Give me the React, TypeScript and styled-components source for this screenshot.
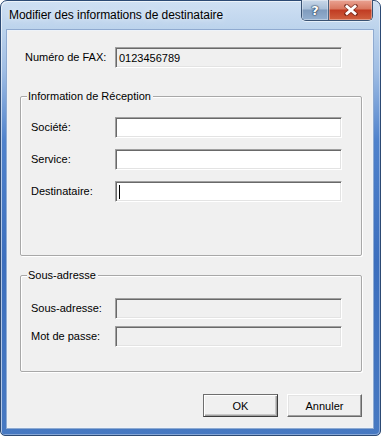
import React from "react";
import styled, { createGlobalStyle, css } from "styled-components";

const Global = createGlobalStyle`
  html, body { margin: 0; padding: 0; background: #ffffff; }
  body { font-family: "Liberation Sans", Arial, sans-serif; }
  * { box-sizing: border-box; }
`;

const Window = styled.div`
  width: 381px;
  height: 436px;
  display: flex;
  flex-direction: column;
  padding: 0 7px 7px 6px;
  border: 1px solid #2c4a74;
  border-radius: 7px 7px 5px 5px;
  background: linear-gradient(
    to bottom,
    #cfe0f3 0px,
    #bcd3ec 28px,
    #9fbde4 70px,
    #4f82cc 140px,
    #3c6fbe 260px,
    #4779c2 436px
  );
  box-shadow: inset 1px 1px 0 rgba(255, 255, 255, 0.6), inset -1px -1px 0 rgba(255, 255, 255, 0.35);
`;

const TitleBar = styled.div`
  height: 29px;
  display: flex;
  align-items: flex-start;
  justify-content: space-between;
`;

const Title = styled.div`
  padding: 7px 0 0 2px;
  font-family: "Liberation Sans", Arial, sans-serif;
  font-size: 12px;
  color: #000000;
  letter-spacing: -0.05px;
  text-shadow: 0 0 6px rgba(255, 255, 255, 0.9);
`;

const CaptionGroup = styled.div`
  display: flex;
  margin-top: -1px;
  border: 1px solid #3a5272;
  border-top: none;
  border-radius: 0 0 5px 5px;
  overflow: hidden;
  box-shadow: 0 1px 0 rgba(255, 255, 255, 0.6);
`;

const CaptionButton = styled.div<{ $variant: "help" | "close" }>`
  height: 20px;
  display: flex;
  align-items: center;
  justify-content: center;
  font-family: "DejaVu Sans", sans-serif;
  font-weight: bold;
  font-size: 13px;
  color: #ffffff;
  text-shadow: 0 0 2px #1f3550, 0 0 1px #1f3550, 0 0 1px #1f3550;
  box-shadow: inset 0 0 0 1px rgba(255, 255, 255, 0.35);
  ${(p) =>
    p.$variant === "help"
      ? css`
          width: 27px;
          border-right: 1px solid #4a617e;
          background: linear-gradient(to bottom, #c9d8e9 0%, #a9bfd8 45%, #7f9bbd 50%, #93afcf 100%);
        `
      : css`
          width: 43px;
          background: linear-gradient(to bottom, #eaa393 0%, #d9775f 45%, #c13b22 50%, #d0613f 100%);
        `}
`;

const Client = styled.div`
  flex: 1;
  display: flex;
  flex-direction: column;
  padding: 16px 10px 0 12px;
  background: #f0f0f0;
  border: 1px solid #eef3f9;
  box-shadow: 0 0 0 1px #8faad0;
  font-family: "Liberation Sans", Arial, sans-serif;
  font-size: 11px;
  color: #000000;
`;

const Row = styled.div<{ $indent?: number; $labelWidth: number }>`
  display: grid;
  grid-template-columns: ${(p) => p.$labelWidth}px 227px;
  align-items: center;
  margin-left: ${(p) => p.$indent ?? 0}px;
  height: 21px;
`;

const Label = styled.div`
  font-size: 11px;
  line-height: 13px;
  white-space: nowrap;
`;

const Field = styled.div<{ $readOnly?: boolean }>`
  height: 21px;
  width: 227px;
  display: flex;
  align-items: center;
  padding: 0 3px;
  font-size: 11px;
  background: ${(p) => (p.$readOnly ? "#f0f0f0" : "#ffffff")};
  border: 1px solid;
  border-color: #a0a0a0 #ffffff #ffffff #a0a0a0;
  box-shadow: inset 1px 1px 0 #696969, inset -1px -1px 0 #e3e3e3;
`;

const Caret = styled.span`
  display: inline-block;
  width: 1px;
  height: 14px;
  background: #000000;
`;

const Group = styled.div<{ $height: number; $top: number; $gap: number; $padTop: number }>`
  position: relative;
  height: ${(p) => p.$height}px;
  margin-top: ${(p) => p.$top}px;
  padding: ${(p) => p.$padTop}px 0 0 10px;
  display: flex;
  flex-direction: column;
  gap: ${(p) => p.$gap}px;
  border: 1px solid #a8a8a8;
  box-shadow: inset 1px 1px 0 #ffffff, 1px 1px 0 #ffffff;
  border-radius: 2px;
`;

const Legend = styled.div`
  position: absolute;
  top: -7px;
  left: 6px;
  padding: 0 2px 0 1px;
  background: #f0f0f0;
  font-size: 11px;
  line-height: 13px;
`;

const ButtonBar = styled.div`
  display: flex;
  justify-content: flex-end;
  gap: 9px;
  margin-top: 22px;
`;

const Button = styled.div<{ $default?: boolean }>`
  width: 75px;
  height: 23px;
  display: flex;
  align-items: center;
  justify-content: center;
  font-size: 11px;
  background: #f0f0f0;
  border: 1px solid;
  border-color: #ffffff #696969 #696969 #ffffff;
  box-shadow: inset -1px -1px 0 #a0a0a0, inset 1px 1px 0 #e3e3e3;
  ${(p) =>
    p.$default &&
    css`
      border-color: #6e6e6e #3c3c3c #3c3c3c #6e6e6e;
      box-shadow: inset 1px 1px 0 #ffffff, inset -1px -1px 0 #a0a0a0, inset -2px -2px 0 #c8c8c8;
    `}
`;

const CloseIcon = () => (
  <svg width="14" height="12" viewBox="0 0 14 12">
    <path d="M2.5 2 L11.5 10 M11.5 2 L2.5 10" stroke="#5a1a10" strokeWidth="4.4" strokeLinecap="square" opacity="0.6" />
    <path d="M3 2.5 L11 9.5 M11 2.5 L3 9.5" stroke="#ffffff" strokeWidth="2.8" strokeLinecap="square" />
  </svg>
);

export default function App() {
  return (
    <>
      <Global />
      <Window>
        <TitleBar>
          <Title>Modifier des informations de destinataire</Title>
          <CaptionGroup>
            <CaptionButton $variant="help">?</CaptionButton>
            <CaptionButton $variant="close">
              <CloseIcon />
            </CaptionButton>
          </CaptionGroup>
        </TitleBar>
        <Client>
          <Row $indent={5} $labelWidth={90}>
            <Label>Numéro de FAX:</Label>
            <Field $readOnly>0123456789</Field>
          </Row>

          <Group $height={160} $top={28} $gap={11} $padTop={20}>
            <Legend>Information de Réception</Legend>
            <Row $labelWidth={84}>
              <Label>Société:</Label>
              <Field />
            </Row>
            <Row $labelWidth={84}>
              <Label>Service:</Label>
              <Field />
            </Row>
            <Row $labelWidth={84}>
              <Label>Destinataire:</Label>
              <Field>
                <Caret />
              </Field>
            </Row>
          </Group>

          <Group $height={97} $top={19} $gap={7} $padTop={22}>
            <Legend>Sous-adresse</Legend>
            <Row $labelWidth={84}>
              <Label>Sous-adresse:</Label>
              <Field $readOnly />
            </Row>
            <Row $labelWidth={84}>
              <Label>Mot de passe:</Label>
              <Field $readOnly />
            </Row>
          </Group>

          <ButtonBar>
            <Button $default>OK</Button>
            <Button>Annuler</Button>
          </ButtonBar>
        </Client>
      </Window>
    </>
  );
}
